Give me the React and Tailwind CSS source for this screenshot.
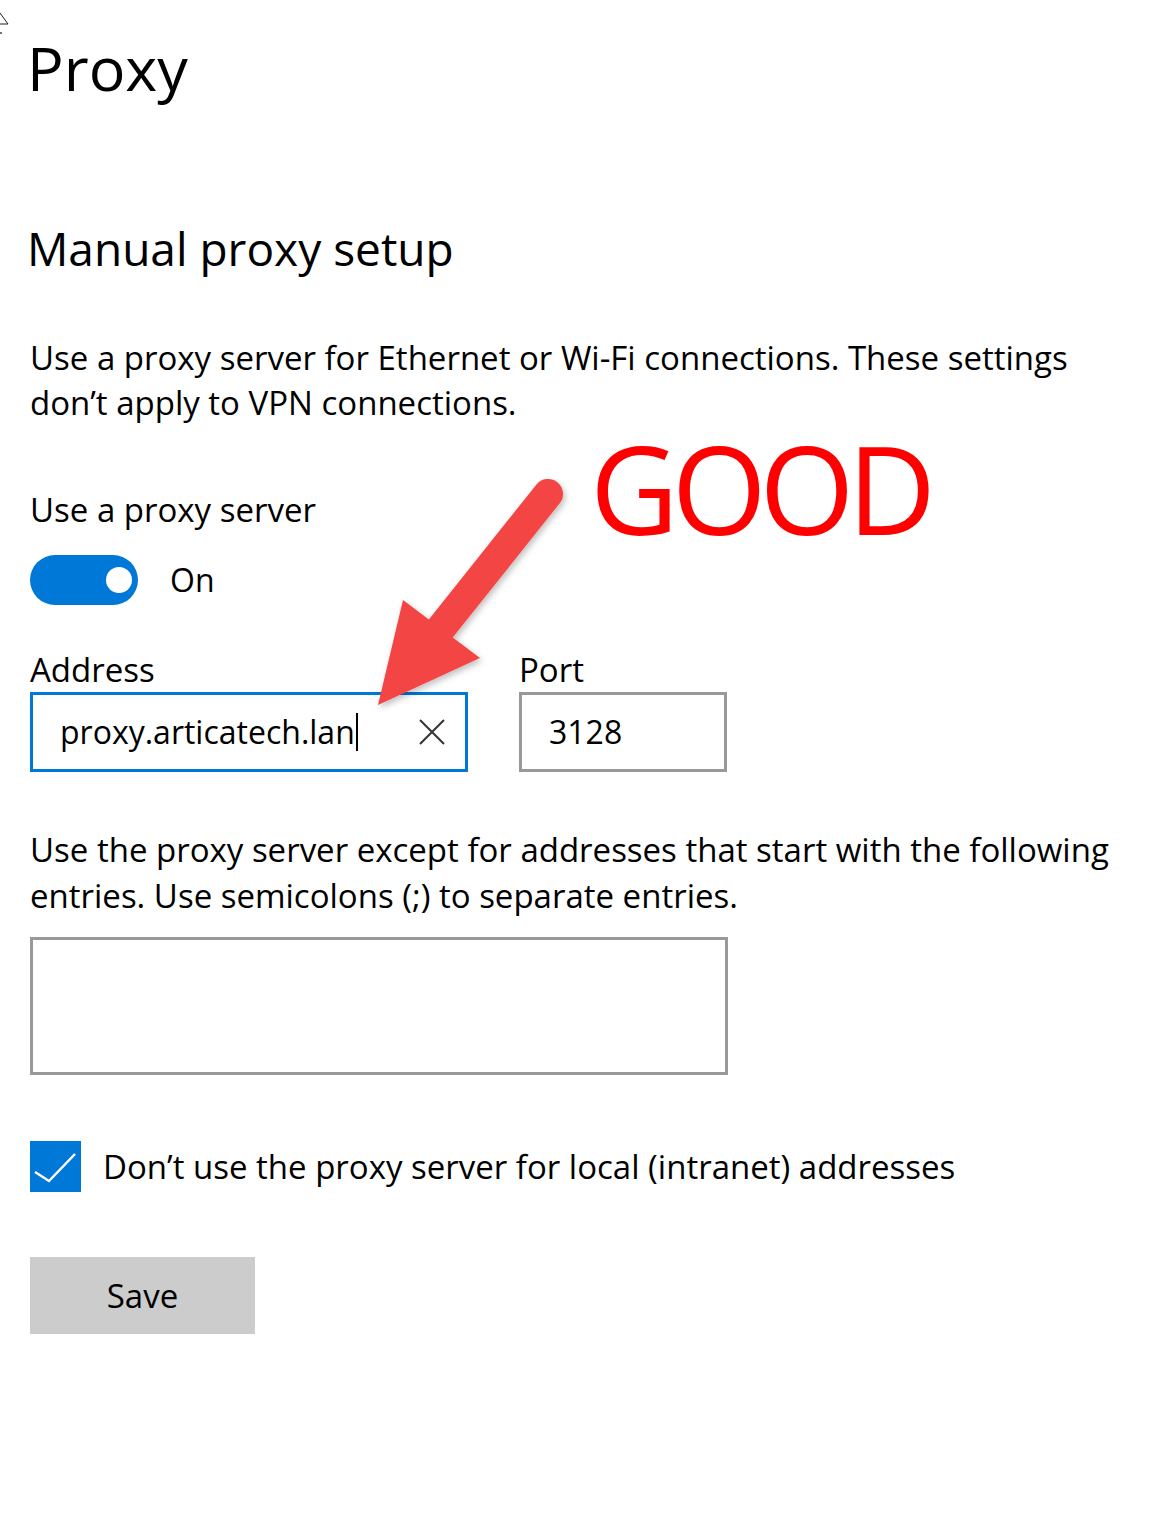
import React from "react";

const font = { fontFamily: '"Open Sans", "Noto Sans", sans-serif' };

const Toggle = () => (
  <div className="flex items-center h-[50px]">
    <div className="w-[108px] h-[50px] rounded-full bg-[#0078d7] flex items-center justify-end pr-[6px]">
      <div className="w-[26px] h-[26px] rounded-full bg-white" />
    </div>
    <span className="ml-[32px] text-[32px] leading-[50px] text-black">On</span>
  </div>
);

const Arrow = () => (
  <svg
    className="absolute left-[360px] top-[465px]"
    width="210"
    height="260"
    viewBox="360 465 210 260"
  >
    <defs>
      <filter id="sh" x="-20%" y="-20%" width="140%" height="140%">
        <feDropShadow dx="2" dy="3" stdDeviation="3" floodColor="#000" floodOpacity="0.25" />
      </filter>
    </defs>
    <g filter="url(#sh)" fill="#f44545" stroke="none">
      <line x1="548" y1="494" x2="438" y2="632" stroke="#f44545" strokeWidth="30" strokeLinecap="round" />
      <polygon points="403,600 480,658 378,705" />
    </g>
  </svg>
);

export default function App() {
  return (
    <div className="relative min-h-[1529px] w-[1155px] bg-white text-black overflow-hidden" style={font}>
      {/* cursor remnant */}
      <svg className="absolute left-0 top-[12px]" width="10" height="24" viewBox="0 0 10 24">
        <path d="M0 1 L8 12 L0 12" fill="none" stroke="#222" strokeWidth="1" />
        <circle cx="1" cy="21" r="1" fill="#444" />
      </svg>

      <Arrow />

      <div className="absolute left-[590px] top-[438px] text-[#ff0000] text-[122px] leading-[100px] tracking-[-7px]">
        GOOD
      </div>

      <div className="pl-[30px] pt-[28px]">
        <h1 className="-ml-[3px] text-[61px] leading-[80px] font-normal">Proxy</h1>

        <h2 className="mt-[110px] -ml-[3px] text-[46px] leading-[60px] font-normal">Manual proxy setup</h2>

        <p className="mt-[57px] text-[33px] leading-[45px] w-[1090px]">
          Use a proxy server for Ethernet or Wi-Fi connections. These settings don’t apply to VPN connections.
        </p>

        <div className="mt-[62px] text-[33px] leading-[45px]">Use a proxy server</div>

        <div className="mt-[23px]">
          <Toggle />
        </div>

        <div className="mt-[45px] flex gap-[51px]">
          <div className="flex flex-col">
            <label className="text-[33px] leading-[40px]">Address</label>
            <div className="mt-[2px] w-[438px] h-[80px] border-[3px] border-[#0078d7] flex items-center pl-[27px] pr-[20px]">
              <span className="text-[32px] leading-[40px]">proxy.articatech.lan</span>
              <span className="ml-[1px] w-[2px] h-[38px] bg-black" />
              <svg className="ml-auto" width="26" height="26" viewBox="0 0 26 26">
                <path d="M1 1 L25 25 M25 1 L1 25" stroke="#333" strokeWidth="2" fill="none" />
              </svg>
            </div>
          </div>
          <div className="flex flex-col">
            <label className="text-[33px] leading-[40px]">Port</label>
            <div className="mt-[2px] w-[208px] h-[80px] border-[3px] border-[#999999] flex items-center pl-[27px]">
              <span className="text-[32px] leading-[40px]">3128</span>
            </div>
          </div>
        </div>

        <p className="mt-[55px] text-[33px] leading-[46px] w-[1120px]">
          Use the proxy server except for addresses that start with the following entries. Use semicolons (;) to separate entries.
        </p>

        <div className="mt-[18px] w-[698px] h-[138px] border-[3px] border-[#999999]" />

        <div className="mt-[66px] flex items-center">
          <div className="w-[51px] h-[51px] bg-[#0078d7] flex items-center justify-center">
            <svg width="51" height="51" viewBox="0 0 51 51">
              <path d="M5 31 L19 40 L45 13" stroke="#fff" strokeWidth="2.5" fill="none" />
            </svg>
          </div>
          <span className="ml-[22px] text-[33px] leading-[45px]">
            Don’t use the proxy server for local (intranet) addresses
          </span>
        </div>

        <button className="mt-[65px] w-[225px] h-[77px] bg-[#cccccc] text-[33px] text-black">
          Save
        </button>
      </div>
    </div>
  );
}
